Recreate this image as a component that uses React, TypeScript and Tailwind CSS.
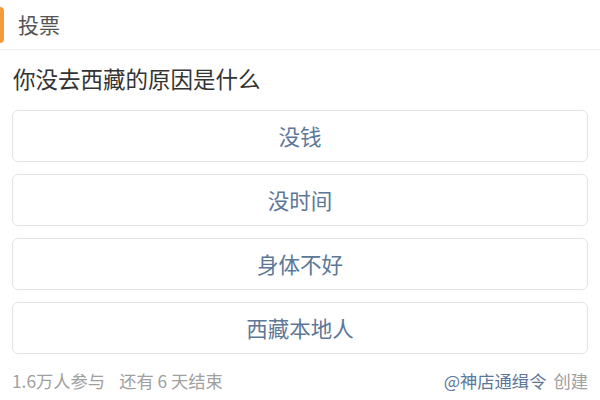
import React from 'react';

const options = ['没钱', '没时间', '身体不好', '西藏本地人'];

export default function App() {
  return (
    <div
      className="w-[600px] h-[400px] bg-white overflow-hidden"
      style={{ fontFamily: '"Noto Sans CJK SC", "Noto Sans", sans-serif' }}
    >
      {/* header */}
      <div className="h-[50px] flex items-center border-b border-[#ececec]">
        <div className="w-[4px] h-[36px] bg-[#f39a3b] rounded-r-sm" />
        <span className="ml-[14px] text-[21px] text-[#555]">投票</span>
      </div>

      <div className="px-[12px]">
        <h1 className="mt-[11px] ml-[1px] text-[22.5px] leading-[34px] text-[#333]">你没去西藏的原因是什么</h1>

        <div className="mt-[15px] flex flex-col gap-[12px]">
          {options.map((o) => (
            <button
              key={o}
              className="h-[52px] w-full rounded-[6px] border border-[#e3e3e3] bg-white text-[21.5px] text-[#5d7799] flex items-center justify-center"
            >
              {o}
            </button>
          ))}
        </div>

        <div className="mt-[15px] flex items-center justify-between text-[17.3px] leading-[24px]">
          <span className="text-[#a0a0a0]">
            1.6万人参与<span className="ml-[14px]">还有 6 天结束</span>
          </span>
          <span>
            <span className="text-[#5d7799]">@神店通缉令</span>
            <span className="text-[#a0a0a0] ml-[7px]">创建</span>
          </span>
        </div>
      </div>
    </div>
  );
}
